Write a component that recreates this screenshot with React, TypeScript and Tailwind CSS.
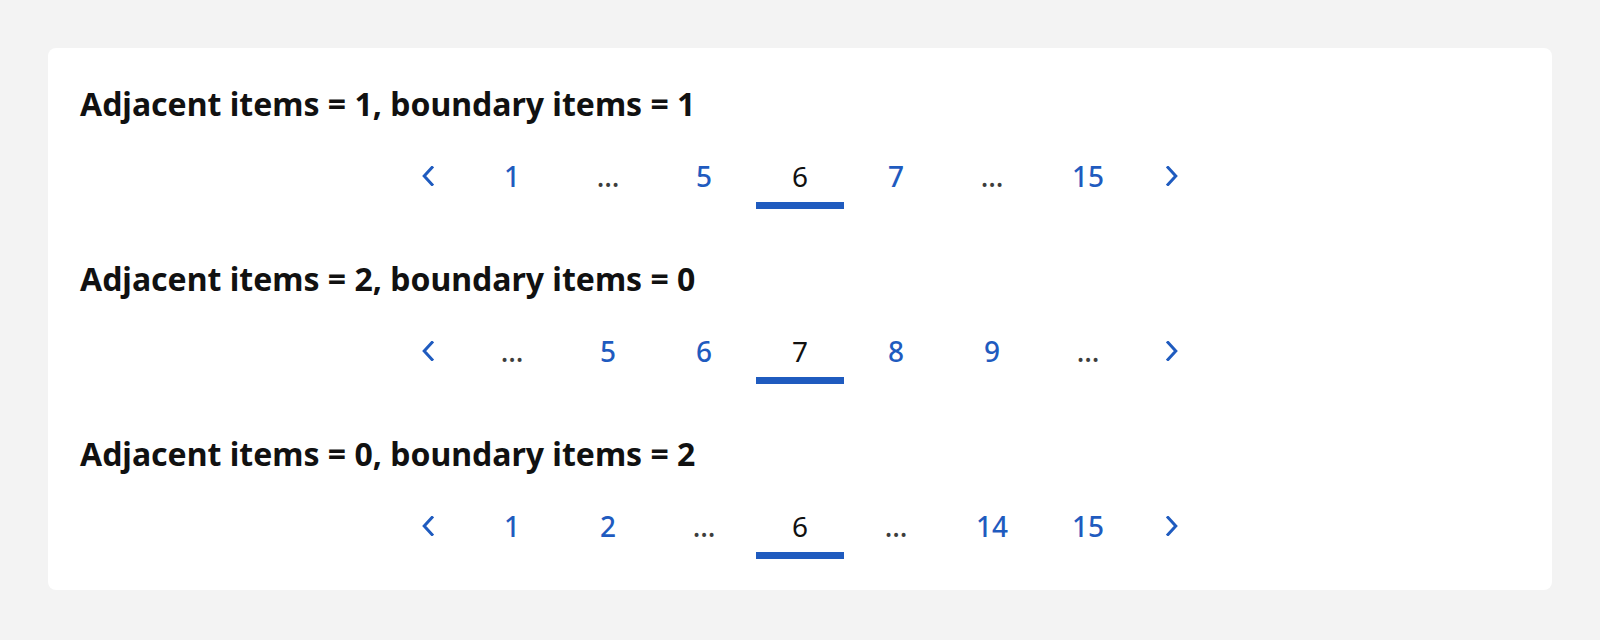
type Item = number | "gap";

const rows: { title: string; current: number; items: Item[] }[] = [
    { title: "Adjacent items = 1, boundary items = 1", current: 6, items: [1, "gap", 5, 6, 7, "gap", 15] },
    { title: "Adjacent items = 2, boundary items = 0", current: 7, items: ["gap", 5, 6, 7, 8, 9, "gap"] },
    { title: "Adjacent items = 0, boundary items = 2", current: 6, items: [1, 2, "gap", 6, "gap", 14, 15] },
];

function Chevron({ dir }: { dir: "left" | "right" }) {
    return (
        <svg width="12" height="20" viewBox="0 0 12 20" fill="none" className="text-[#1f5bbf]">
            <path
                d={dir === "left" ? "M10 1.5 L2.2 10 L10 18.5" : "M2 1.5 L9.8 10 L2 18.5"}
                stroke="currentColor"
                strokeWidth="3"
                strokeLinecap="square"
            />
        </svg>
    );
}

function Pager({ current, items }: { current: number; items: Item[] }) {
    return (
        <nav className="flex justify-center gap-2">
            <button className="w-16 h-[40px] flex items-center justify-center">
                <Chevron dir="left" />
            </button>
            {items.map((it, i) => (
                <div key={i} className="w-[88px] flex flex-col items-center">
                    {it === "gap" ? (
                        <span className="leading-[40px] text-[28px] font-medium text-[#3d3d3d]">…</span>
                    ) : (
                        <a
                            href="#"
                            className={
                                it === current
                                    ? "leading-[40px] text-[28px] text-[#111111]"
                                    : "leading-[40px] text-[28px] font-medium text-[#1f5bbf]"
                            }
                        >
                            {it}
                        </a>
                    )}
                    <div className={it === current ? "mt-[6px] h-[7px] w-full bg-[#1f5bbf]" : "mt-[6px] h-[7px] w-full"} />
                </div>
            ))}
            <button className="w-16 h-[40px] flex items-center justify-center">
                <Chevron dir="right" />
            </button>
        </nav>
    );
}

export default function App() {
    return (
        <div className="min-h-[640px] bg-[#f3f3f3] p-12 font-['Noto_Sans',sans-serif]">
            <div className="bg-white rounded-lg p-8 pb-[31px] flex flex-col gap-[46px]">
                {rows.map((r) => (
                    <section key={r.title} className="flex flex-col gap-[28px]">
                        <h2 className="text-[32px] leading-[48px] font-bold text-[#111111]">{r.title}</h2>
                        <Pager current={r.current} items={r.items} />
                    </section>
                ))}
            </div>
        </div>
    );
}
